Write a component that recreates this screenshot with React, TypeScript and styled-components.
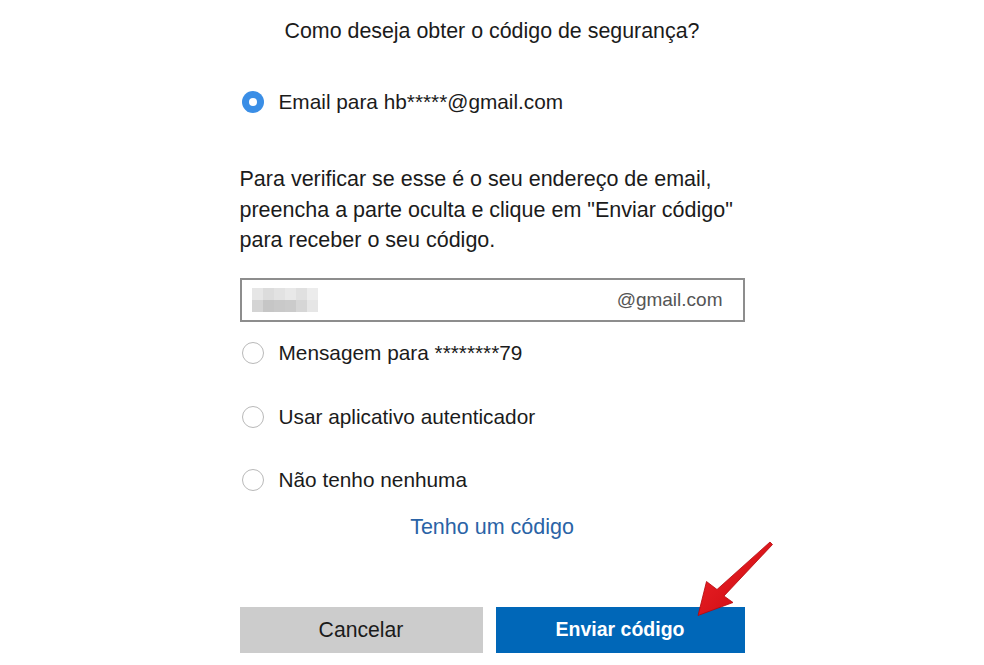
import React from 'react';
import styled, {createGlobalStyle} from 'styled-components';

const GlobalStyle = createGlobalStyle`
  html, body {
    margin: 0;
    padding: 0;
    background: #fff;
  }
  body {
    font-family: "Liberation Sans", Arial, sans-serif;
    color: #1b1b1b;
  }
`;

const Page = styled.div`
  position: relative;
  width: 984px;
  height: 665px;
  overflow: hidden;
  display: flex;
  flex-direction: column;
  align-items: center;
  padding-top: 19px;
  box-sizing: border-box;
`;

const Title = styled.h1`
  margin: 0;
  font-size: 21.4px;
  font-weight: normal;
  line-height: 24px;
  text-align: center;
`;

const Column = styled.div`
  width: 505px;
  display: flex;
  flex-direction: column;
`;

const OptionRow = styled.label<{$top: number}>`
  display: flex;
  align-items: center;
  gap: 15px;
  height: 24px;
  margin-top: ${p => p.$top}px;
  padding-left: 2px;
  font-size: 20.8px;
  cursor: pointer;
`;

const Radio = styled.span<{$checked?: boolean}>`
  flex: none;
  width: 22px;
  height: 22px;
  border-radius: 50%;
  box-sizing: border-box;
  background: ${p => (p.$checked ? '#3a8ee6' : '#fff')};
  border: ${p => (p.$checked ? 'none' : '1.5px solid #b9b9b9')};
  display: flex;
  align-items: center;
  justify-content: center;

  &::after {
    content: '';
    display: ${p => (p.$checked ? 'block' : 'none')};
    width: 8px;
    height: 8px;
    border-radius: 50%;
    background: #fff;
  }
`;

const Paragraph = styled.p`
  margin: 50px 0 0;
  font-size: 21.5px;
  line-height: 30.5px;
`;

const EmailBox = styled.div`
  margin-top: 22px;
  height: 44px;
  box-sizing: border-box;
  border: 2px solid #8d8d8d;
  display: flex;
  align-items: center;
  justify-content: space-between;
  padding: 0 20px 0 10px;
  font-size: 19px;
  color: #555;
`;

const Mosaic = styled.div`
  display: grid;
  grid-template-columns: repeat(6, 11px);
  grid-template-rows: repeat(2, 12px);
`;

const Cell = styled.span<{$shade: string}>`
  background: ${p => p.$shade};
`;

const Link = styled.a`
  margin-top: 23px;
  align-self: center;
  font-size: 21.5px;
  line-height: 24px;
  color: #2a63a6;
  text-decoration: none;
`;

const ButtonRow = styled.div`
  margin-top: 68px;
  display: flex;
  gap: 13px;
`;

const Button = styled.button<{$primary?: boolean}>`
  height: 46px;
  border: none;
  font-family: "Liberation Sans", Arial, sans-serif;
  font-size: ${p => (p.$primary ? '19.5px' : '21.2px')};
  font-weight: ${p => (p.$primary ? 'bold' : 'normal')};
  color: ${p => (p.$primary ? '#fff' : '#1b1b1b')};
  background: ${p => (p.$primary ? '#0067b8' : '#cccccc')};
  width: ${p => (p.$primary ? '249px' : '243px')};
  cursor: pointer;
`;

const Arrow = styled.svg`
  position: absolute;
  left: 690px;
  top: 535px;
  width: 90px;
  height: 90px;
`;

const shades = ['#e6e6e6', '#dcdcdc', '#e2e2e2', '#e8e8e8', '#e0e0e0', '#ececec',
  '#d4d4d4', '#c6c6c6', '#c9c9c9', '#cbcbcb', '#d6d6d6', '#e6e6e6'];

const options = [
  {label: 'Mensagem para ********79', top: 19},
  {label: 'Usar aplicativo autenticador', top: 40},
  {label: 'Não tenho nenhuma', top: 39},
];

export default function App() {
  return (
    <Page>
      <GlobalStyle />
      <Title>Como deseja obter o código de segurança?</Title>
      <Column>
        <OptionRow $top={47}>
          <Radio $checked />
          Email para hb*****@gmail.com
        </OptionRow>
        <Paragraph>
          Para verificar se esse é o seu endereço de email,<br />
          preencha a parte oculta e clique em "Enviar código"<br />
          para receber o seu código.
        </Paragraph>
        <EmailBox>
          <Mosaic>
            {shades.map((s, i) => <Cell key={i} $shade={s} />)}
          </Mosaic>
          <span>@gmail.com</span>
        </EmailBox>
        {options.map(o => (
          <OptionRow key={o.label} $top={o.top}>
            <Radio />
            {o.label}
          </OptionRow>
        ))}
        <Link href="#">Tenho um código</Link>
        <ButtonRow>
          <Button>Cancelar</Button>
          <Button $primary>Enviar código</Button>
        </ButtonRow>
      </Column>
      <Arrow viewBox="690 535 90 90">
        <defs>
          <linearGradient id="red" x1="0" y1="0" x2="1" y2="1">
            <stop offset="0" stopColor="#f0262b" />
            <stop offset="1" stopColor="#c8070d" />
          </linearGradient>
        </defs>
        <polygon
          points="770,542 772.5,544.5 724,596 733,602.5 698,615.5 706.5,581.5 717,589.5"
          fill="url(#red)"
          stroke="#b3060b"
          strokeWidth="0.8"
          strokeLinejoin="round"
        />
      </Arrow>
    </Page>
  );
}
